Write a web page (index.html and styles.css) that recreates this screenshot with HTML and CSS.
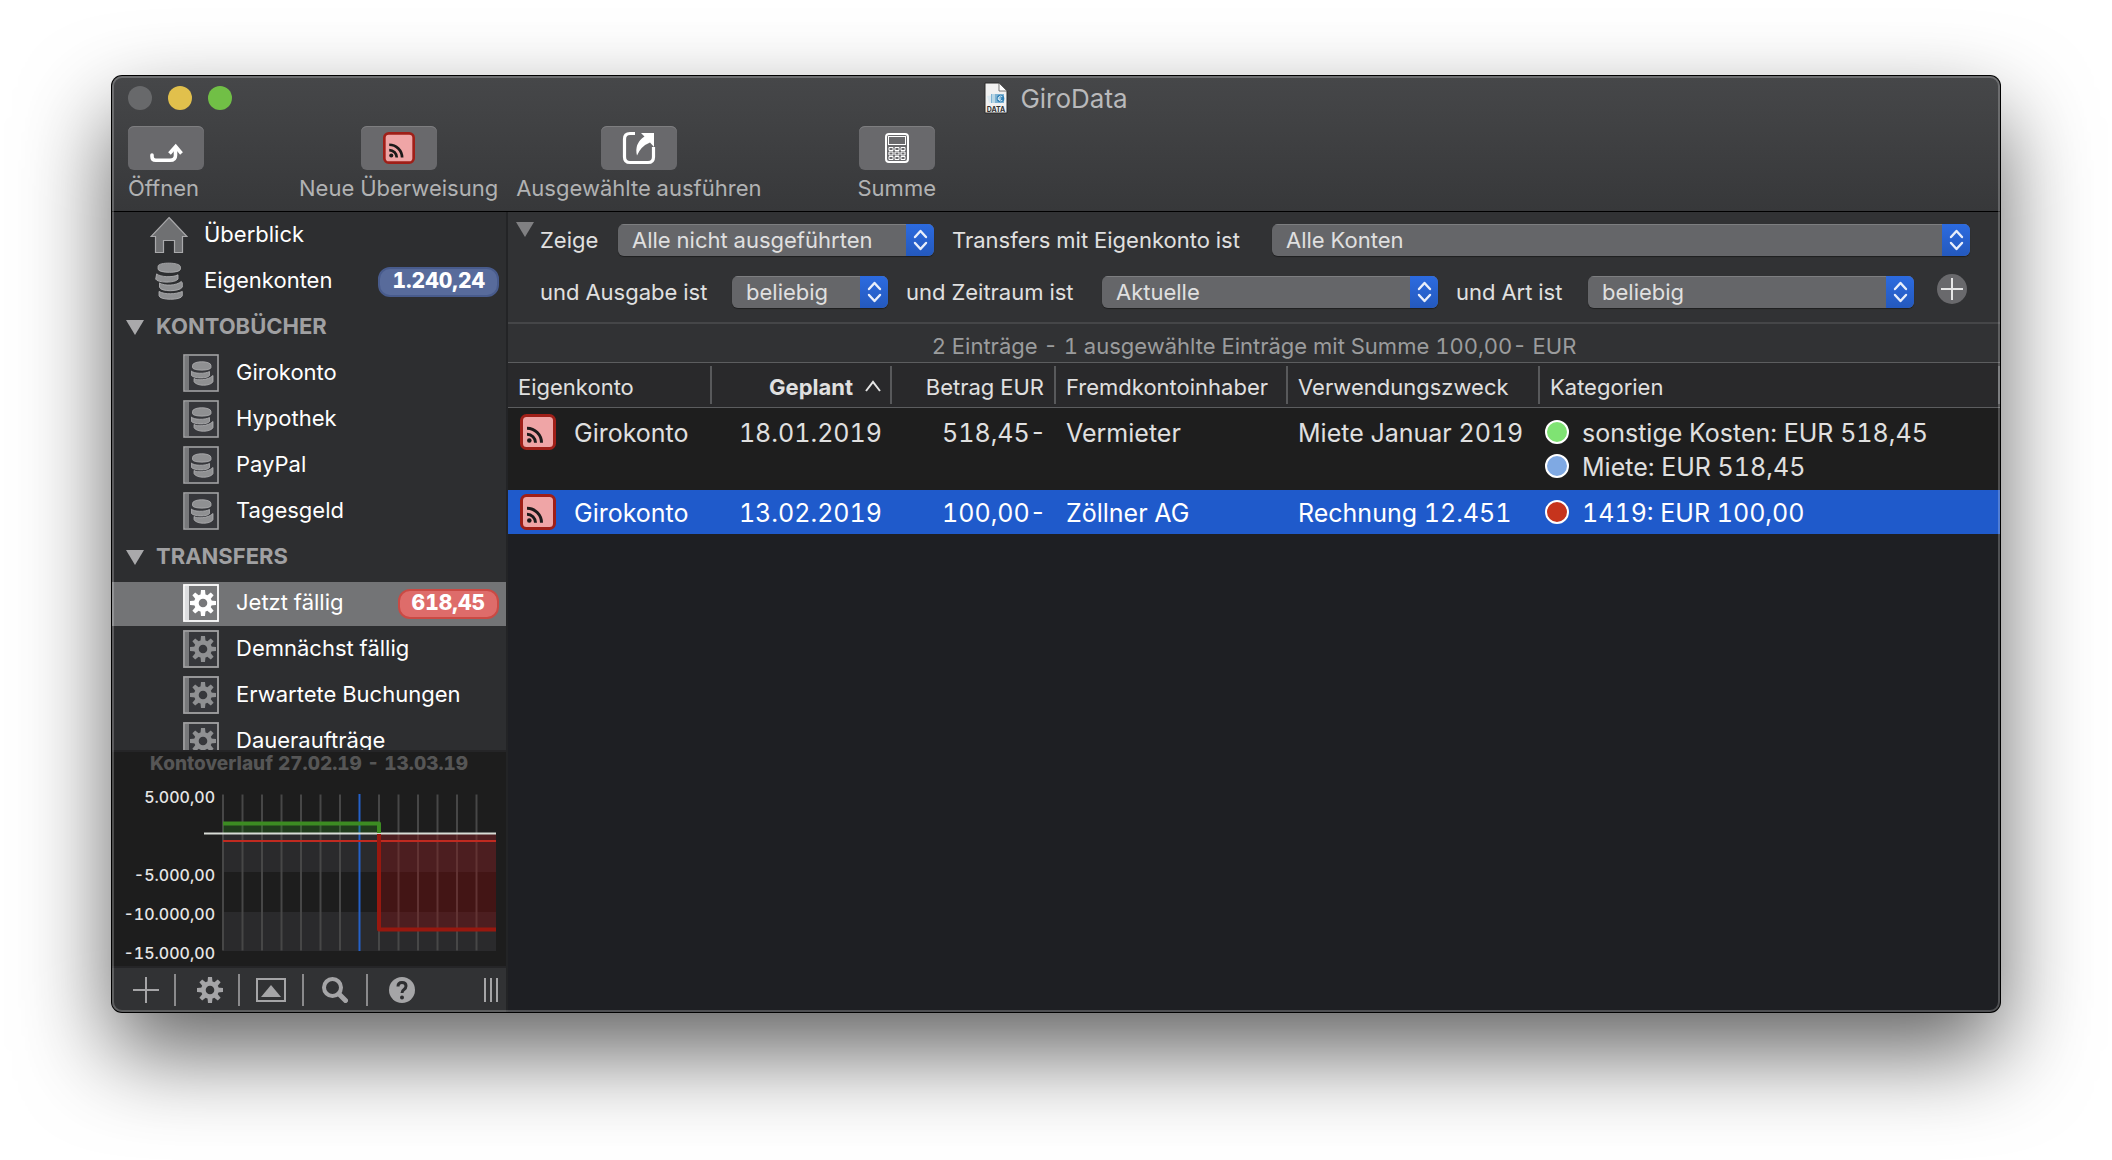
FILE: index.html
```html
<!DOCTYPE html>
<html lang="de">
<head>
<meta charset="utf-8">
<title>GiroData</title>
<link rel="stylesheet" href="styles.css">
</head>
<body>
<svg class="defs" aria-hidden="true">
  <symbol id="gear" viewBox="0 0 26 26">
    <circle cx="13" cy="13" r="6.6" fill="none" stroke="currentColor" stroke-width="4.6"/>
    <g fill="currentColor">
      <path d="M11 0h4l.6 6h-5.2z"/>
      <path d="M11 0h4l.6 6h-5.2z" transform="rotate(45 13 13)"/>
      <path d="M11 0h4l.6 6h-5.2z" transform="rotate(90 13 13)"/>
      <path d="M11 0h4l.6 6h-5.2z" transform="rotate(135 13 13)"/>
      <path d="M11 0h4l.6 6h-5.2z" transform="rotate(180 13 13)"/>
      <path d="M11 0h4l.6 6h-5.2z" transform="rotate(225 13 13)"/>
      <path d="M11 0h4l.6 6h-5.2z" transform="rotate(270 13 13)"/>
      <path d="M11 0h4l.6 6h-5.2z" transform="rotate(315 13 13)"/>
    </g>
  </symbol>
  <symbol id="book-coins" viewBox="0 0 36 38">
    <rect x="1" y="1" width="34" height="36" fill="#36373b" stroke="#a2a2a4" stroke-width="1.6"/>
    <path d="M2 2h4v34H2z" fill="#77787a"/>
    <g fill="#8f9092" stroke="#b0b0b2" stroke-width=".8">
      <path d="M11 24.500c3 2 14 2 19-3v6c-2 5-17 5-19 0z"/>
      <path d="M8.500 17c2 2.800 14 3 18 .500v4c-2 3.500-16 3-18 0z"/>
      <path d="M9.500 11.500c0-5 18.500-5 18.500 0v2c0 3.500-18.500 3.500-18.500 0z"/>
    </g>
  </symbol>
  <symbol id="transfer" viewBox="0 0 36 36">
    <rect x="1.500" y="1.500" width="33" height="33" rx="5" fill="#efa5a6" stroke="#9f1f18" stroke-width="3"/>
    <circle cx="9.300" cy="26.500" r="2.300" fill="#1c1a1a"/>
    <path d="M7 20.300a8.500 8.500 0 0 1 8.500 8.500M7 14.300a14.500 14.500 0 0 1 14.500 14.500" fill="none" stroke="#1c1a1a" stroke-width="3"/>
  </symbol>
  <symbol id="updown" viewBox="0 0 28 32">
    <rect width="28" height="32" fill="url(#blue)"/>
    <path d="M9 13l5.500-6 5.500 6M9 19l5.500 6 5.500-6" fill="none" stroke="#e8eefb" stroke-width="2.400" stroke-linecap="round" stroke-linejoin="round"/>
  </symbol>
  <symbol id="book-gear" viewBox="0 0 36 38">
    <rect x="1" y="1" width="34" height="36" fill="var(--page)" stroke="var(--edge)" stroke-width="1.800"/>
    <path d="M2 2h4v34H2z" fill="var(--spine)"/>
    <use href="#gear" x="7" y="6" width="26" height="26"/>
  </symbol>
  <linearGradient id="blue" x1="0" y1="0" x2="0" y2="1">
    <stop offset="0" stop-color="#2c6be0"/><stop offset="1" stop-color="#2459bd"/>
  </linearGradient>
</svg>

<main class="window">
  <header class="header">
    <div class="titlebar">
      <div class="lights">
        <button class="light light-close" type="button" aria-label="Schließen"></button>
        <button class="light light-min" type="button" aria-label="Minimieren"></button>
        <button class="light light-zoom" type="button" aria-label="Zoomen"></button>
      </div>
      <h1 class="title">
        <svg class="doc" viewBox="0 0 24 32" aria-hidden="true">
          <path d="M1 1h14l8 8v22H1z" fill="#f1f1f1" stroke="#2b2b2b" stroke-width="1"/>
          <path d="M15 1l8 8h-8z" fill="#fff" stroke="#555" stroke-width=".8"/>
          <path d="M3 14l16-2 2 7-16 2z" fill="#dbe9f0"/>
          <rect x="7" y="12" width="13" height="9" fill="#7fb2d2"/>
          <rect x="8" y="12" width="3" height="9" fill="#b8d6e5"/>
          <circle cx="16.500" cy="16.500" r="3.800" fill="#2f7fb5"/>
          <path d="M18.300 14.600a2.400 2.400 0 1 0 0 3.800M13.800 16h3.500M13.800 17.300h3" fill="none" stroke="#d9edf7" stroke-width="1"/>
          <text x="12" y="29.500" text-anchor="middle" class="doc-label">DATA</text>
        </svg>
        GiroData
      </h1>
    </div>
    <div class="toolbar">
      <button class="tool tool-open" type="button">
        <span class="tool-face"><svg width="36" height="36" viewBox="0 0 36 36"><path d="M4 25v1.500q0 3.700 3.700 3.700H22q5.500 0 5.500-5V19" fill="none" stroke="#fff" stroke-width="3.600" stroke-linecap="round"/><path d="M21.500 23.500l6.200-7 5.800 7" fill="none" stroke="#fff" stroke-width="3.600"/></svg></span>
        <span>Öffnen</span>
      </button>
      <button class="tool tool-new" type="button">
        <span class="tool-face"><svg width="32" height="32"><use href="#transfer"/></svg></span>
        <span>Neue Überweisung</span>
      </button>
      <button class="tool tool-run" type="button">
        <span class="tool-face"><svg width="34" height="34" viewBox="0 0 34 34"><path d="M13 2.500H8Q2.500 2.500 2.500 8v18q0 5.500 5.500 5.500h18q5.500 0 5.500-5.500V16" fill="none" stroke="#fff" stroke-width="3.200"/><path d="M19 2h13v14l-4-4.500q-9 3.500-13 13-3-12 7.500-19z" fill="#fff"/></svg></span>
        <span>Ausgewählte ausführen</span>
      </button>
      <button class="tool tool-sum" type="button">
        <span class="tool-face"><svg width="24" height="30" viewBox="0 0 24 30" fill="none" stroke="#fff"><rect x="1" y="1" width="22" height="28" rx="3" stroke-width="2"/><rect x="3.500" y="3.500" width="17" height="8"/><path d="M4 14.500h4v3H4zM10 14.500h4v3h-4zM16 14.500h4v3h-4zM4 19h4v3H4zM10 19h4v3h-4zM16 19h4v3h-4zM4 23.500h4v3H4zM10 23.500h4v3h-4zM16 23.500h4v3h-4z"/></svg></span>
        <span>Summe</span>
      </button>
    </div>
  </header>

  <div class="body">
    <aside class="sidebar">
      <nav class="nav">
        <a class="item" href="#"><svg class="top-icon" viewBox="0 0 38 38"><path d="M19 1.500L37 20.500h-4.500V36.500h-8V24.500h-11v12h-8v-16H1z" fill="#6f7072" stroke="#a9a9ab" stroke-width="1.200"/></svg><span>Überblick</span></a>
        <a class="item" href="#"><svg class="top-icon" viewBox="0 0 38 40"><g fill="#8f9092" stroke="#b2b2b4" stroke-width=".9"><path d="M8.500 31c6 3.500 18 3 24.500 0v4.500c-1 5-24 5-24.500 0z"/><path d="M9 22c5 3.500 18 3 23-1.500l1 1.500v4.500c-3 5-23 5-24 0z"/><path d="M6 12.500c4 3.500 17 4 22.500 1v4.500c-3 4.500-22 4-23.500 0z"/><path d="M7.500 4.500c0-4.500 23-4.500 23.500.500v2.500c0 4.500-23 4.500-23.500 0z"/></g></svg><span>Eigenkonten</span><span class="badge badge-blue">1.240,24</span></a>
        <h2 class="section"><svg width="18" height="15"><path d="M0 0h18L9 15z" fill="#a9a9ab"/></svg><span>KONTOBÜCHER</span></h2>
        <a class="item sub" href="#"><svg class="book"><use href="#book-coins"/></svg><span>Girokonto</span></a>
        <a class="item sub" href="#"><svg class="book"><use href="#book-coins"/></svg><span>Hypothek</span></a>
        <a class="item sub" href="#"><svg class="book"><use href="#book-coins"/></svg><span>PayPal</span></a>
        <a class="item sub" href="#"><svg class="book"><use href="#book-coins"/></svg><span>Tagesgeld</span></a>
        <h2 class="section"><svg width="18" height="15"><path d="M0 0h18L9 15z" fill="#a9a9ab"/></svg><span>TRANSFERS</span></h2>
        <a class="item sub selected" href="#" aria-current="page"><svg class="book"><use href="#book-gear"/></svg><span>Jetzt fällig</span><span class="badge badge-red">618,45</span></a>
        <a class="item sub" href="#"><svg class="book"><use href="#book-gear"/></svg><span>Demnächst fällig</span></a>
        <a class="item sub" href="#"><svg class="book"><use href="#book-gear"/></svg><span>Erwartete Buchungen</span></a>
        <a class="item sub" href="#"><svg class="book"><use href="#book-gear"/></svg><span>Daueraufträge</span></a>
      </nav>
      <svg class="chart" viewBox="0 0 394 214" role="img" aria-label="Kontoverlauf">
        <text class="chart-title" x="197" y="18" text-anchor="middle">Kontoverlauf 27.02.19 - 13.03.19</text>
        <g class="chart-label" text-anchor="end">
          <text x="103" y="51">5.000,00</text>
          <text x="103" y="129">-5.000,00</text>
          <text x="103" y="168">-10.000,00</text>
          <text x="103" y="207">-15.000,00</text>
        </g>
        <path d="M111 82h273v38H111zM111 160h273v39H111z" fill="#2a2a2c"/>
        <path d="M111 42.500v156M130.500 42.500v156M150 42.500v156M169.500 42.500v156M189 42.500v156M208.500 42.500v156M228 42.500v156M267 42.500v156M286.500 42.500v156M306 42.500v156M325.500 42.500v156M345 42.500v156M364.500 42.500v156" stroke="#474747" stroke-width="2"/>
        <path d="M247.500 42v157" stroke="#2461c8" stroke-width="2"/>
        <path d="M111 72h156v9H111z" fill="#2b9a1c" fill-opacity=".25"/>
        <path d="M267 82h117v95H267z" fill="#a00" fill-opacity=".27"/>
        <path d="M92 81.500h292" stroke="#d8dcd6" stroke-width="2"/>
        <path d="M111 89h273" stroke="#c02a20" stroke-width="2"/>
        <path d="M111 71.500h156V81" fill="none" stroke="#3c8c22" stroke-width="4" stroke-linejoin="round"/>
        <path d="M267 82v95.500h117" fill="none" stroke="#98180f" stroke-width="4" stroke-linejoin="round"/>
      </svg>
      <div class="bottombar">
        <button type="button" aria-label="Hinzufügen"><svg width="26" height="26"><path d="M13 0v26M0 13h26" stroke="#a5a5a7" stroke-width="2"/></svg></button>
        <button type="button" aria-label="Aktionen"><svg width="26" height="26"><use href="#gear"/></svg></button>
        <button type="button" aria-label="Diagramm"><svg width="30" height="24"><rect x="1" y="1" width="28" height="22" fill="none" stroke="#a5a5a7" stroke-width="2"/><path d="M5 19l10-12 10 12z" fill="#a5a5a7"/></svg></button>
        <button type="button" aria-label="Suchen"><svg width="26" height="26"><circle cx="10.500" cy="10.500" r="8.500" fill="none" stroke="#a5a5a7" stroke-width="4"/><path d="M17 17l6.500 6.500" stroke="#a5a5a7" stroke-width="5" stroke-linecap="round"/></svg></button>
        <button type="button" aria-label="Hilfe"><svg width="26" height="26"><circle cx="13" cy="13" r="13" fill="#a5a5a7"/><path d="M9 9.500q0-4 4-4t4 3.500q0 2-2 3.500-2 1.200-2 3.500" fill="none" stroke="#2d2e30" stroke-width="3"/><circle cx="13" cy="20.500" r="2" fill="#2d2e30"/></svg></button>
        <svg class="grip" width="14" height="24"><path d="M1 0v24M7 0v24M13 0v24" stroke="#a5a5a7" stroke-width="2"/></svg>
      </div>
    </aside>

    <section class="content">
      <form class="filters">
        <svg class="disclosure" width="18" height="15"><path d="M0 0h18L9 15z" fill="#808082"/></svg>
        <div class="filter-row row-one">
          <label for="f-show">Zeige</label>
          <span class="select"><select id="f-show"><option>Alle nicht ausgeführten</option></select><svg width="28" height="32"><use href="#updown"/></svg></span>
          <label for="f-account" class="next">Transfers mit Eigenkonto ist</label>
          <span class="select"><select id="f-account"><option>Alle Konten</option></select><svg width="28" height="32"><use href="#updown"/></svg></span>
        </div>
        <div class="filter-row row-two">
          <label for="f-out">und Ausgabe ist</label>
          <span class="select"><select id="f-out"><option>beliebig</option></select><svg width="28" height="32"><use href="#updown"/></svg></span>
          <label for="f-time" class="next">und Zeitraum ist</label>
          <span class="select"><select id="f-time"><option>Aktuelle</option></select><svg width="28" height="32"><use href="#updown"/></svg></span>
          <label for="f-kind" class="next">und Art ist</label>
          <span class="select"><select id="f-kind"><option>beliebig</option></select><svg width="28" height="32"><use href="#updown"/></svg></span>
          <button class="add" type="button" aria-label="Filter hinzufügen"><svg width="30" height="30"><circle cx="15" cy="15" r="15" fill="#69696c"/><path d="M15 4v22M4 15h22" stroke="#e6e6e6" stroke-width="2"/></svg></button>
        </div>
      </form>
      <p class="status">2 Einträge - 1 ausgewählte Einträge mit Summe 100,00- EUR</p>
      <table class="grid">
        <colgroup><col class="c-account"><col class="c-date"><col class="c-amount"><col class="c-owner"><col class="c-purpose"><col></colgroup>
        <thead>
          <tr>
            <th>Eigenkonto</th>
            <th class="num sorted">Geplant<svg width="16" height="12"><path d="M1 11l7-9 7 9" fill="none" stroke="#e4e4e4" stroke-width="2"/></svg></th>
            <th class="num">Betrag EUR</th>
            <th>Fremdkontoinhaber</th>
            <th>Verwendungszweck</th>
            <th>Kategorien</th>
          </tr>
        </thead>
        <tbody>
          <tr class="tall">
            <td class="account"><div class="line"><svg width="36" height="36"><use href="#transfer"/></svg><span>Girokonto</span></div></td>
            <td class="num">18.01.2019</td>
            <td class="num">518,45-</td>
            <td>Vermieter</td>
            <td>Miete Januar 2019</td>
            <td class="cats"><div class="line"><i class="dot dot-green"></i><span>sonstige Kosten: EUR 518,45</span></div><div class="line extra"><i class="dot dot-blue"></i><span>Miete: EUR 518,45</span></div></td>
          </tr>
          <tr class="picked">
            <td class="account"><div class="line"><svg width="36" height="36"><use href="#transfer"/></svg><span>Girokonto</span></div></td>
            <td class="num">13.02.2019</td>
            <td class="num">100,00-</td>
            <td>Zöllner AG</td>
            <td>Rechnung 12.451</td>
            <td class="cats"><div class="line"><i class="dot dot-red"></i><span>1419: EUR 100,00</span></div></td>
          </tr>
        </tbody>
      </table>
    </section>
  </div>
</main>
</body>
</html>
```
FILE: styles.css
```css
* { box-sizing: border-box; }

body {
  margin: 0;
  height: 100vh;
  padding: 76px 112px 148px;
  display: flex;
  background: #fff;
  font-family: Inter, "Liberation Sans", sans-serif;
  font-size: 22px;
  font-variant-numeric: tabular-nums;
  color: #e0e0e0;
}

button, select {
  font: inherit;
  color: inherit;
  border: 0;
  padding: 0;
  background: none;
}

svg { display: block; flex: none; }
.defs { position: absolute; width: 0; height: 0; }

.window {
  position: relative;
  flex: 1;
  min-width: 0;
  display: flex;
  flex-direction: column;
  border-radius: 10px;
  background: #1e1f23;
  box-shadow: 0 0 0 1px #000, 0 40px 90px rgba(0, 0, 0, .62);
}

/* light rim drawn over all panes */
.window::after {
  content: "";
  position: absolute;
  inset: 0;
  border: 2px solid rgba(255, 255, 255, .22);
  border-radius: 10px;
  pointer-events: none;
}

/* title bar and toolbar */
.header {
  height: 136px;
  flex: none;
  border-bottom: 1px solid #000;
  border-radius: 10px 10px 0 0;
  background: linear-gradient(#464749, #37383a);
}

.titlebar {
  height: 44px;
  padding: 0 16px;
  display: grid;
  grid-template-columns: 1fr auto 1fr;
  align-items: center;
}

.lights { display: flex; gap: 16px; }
.light { width: 24px; height: 24px; border-radius: 50%; }
.light-close { background: #68696b; }
.light-min { background: #e1c04c; }
.light-zoom { background: #71bf46; }

.title {
  margin: 0;
  display: flex;
  align-items: center;
  gap: 12px;
  font-size: 26px;
  font-weight: 400;
  color: #b9b9bb;
}
.doc { width: 24px; height: 32px; }
.doc-label { font-size: 7px; font-weight: 700; fill: #333; }

.toolbar {
  display: flex;
  padding: 6px 16px 0;
}
.tool {
  display: flex;
  flex-direction: column;
  align-items: center;
  gap: 4px;
  line-height: 28px;
  color: #b1b2b3;
}
.tool-open { align-items: flex-start; }
.tool-new { margin-left: 95px; }
.tool-run { margin-left: 18px; }
.tool-sum { margin-left: 96px; }
.tool-face {
  width: 76px;
  height: 44px;
  display: grid;
  place-items: center;
  border-radius: 6px;
  background: #69696c;
  box-shadow: inset 0 1px #7e7e80;
}

.body { flex: 1; min-height: 0; display: flex; }

/* sidebar */
.sidebar {
  width: 396px;
  flex: none;
  display: flex;
  flex-direction: column;
  border-right: 2px solid #232426;
  border-radius: 0 0 0 10px;
  background: #2d2e30;
}
.nav {
  flex: 1;
  min-height: 0;
  overflow: hidden;
  padding-top: 2px;
  display: flex;
  flex-direction: column;
  gap: 2px;
}
.item, .section {
  flex: none;
  height: 44px;
  margin: 0;
  display: flex;
  align-items: center;
  line-height: 28px;
}
.item > span, .section > span { padding-bottom: 4px; }
.item > svg, .section > svg { margin-bottom: 2px; }
.item {
  --page: #36373b;
  --edge: #a2a2a4;
  --spine: #77787a;
  gap: 16px;
  padding: 0 7px 0 38px;
  color: #fff;
  text-decoration: none;
}
.item.sub { gap: 17px; padding-left: 71px; }
.item.selected {
  --page: #77787a;
  --edge: #fff;
  --spine: #dcdddf;
  background: #737476;
}
.top-icon { width: 38px; height: 38px; }
.book { width: 36px; height: 38px; color: #8f9092; }
.selected .book { color: #fff; }
.section { gap: 12px; padding-left: 14px; font-size: 22px; font-weight: 700; color: #a0a0a2; }
.item > .badge {
  margin-left: auto;
  height: 30px;
  padding: 0 12px;
  border: 2px solid;
  border-radius: 12px;
  font-size: 21px;
  line-height: 24px;
  font-weight: 800;
}
.item > .badge-blue { background: #586b9b; border-color: #485b8c; }
.item > .badge-red { background: #de6c6a; border-color: #ca4a44; }

.chart {
  width: 394px;
  height: 218px;
  border: solid #252527;
  border-width: 2px 0;
  background: #1d1d1d;
}
.chart-title { font-size: 19px; font-weight: 800; fill: #565656; }
.chart-label { font-size: 16px; font-weight: 500; fill: #e6e6e6; }

.bottombar {
  height: 44px;
  display: flex;
  align-items: center;
  padding-right: 8px;
  border-radius: 0 0 0 10px;
  background: #313234;
  color: #a5a5a7;
}
.bottombar button {
  width: 64px;
  height: 32px;
  display: grid;
  place-items: center;
  border-right: 2px solid #8a8a8c;
}
.bottombar button:nth-of-type(-n+2) { padding-left: 6px; }
.bottombar button:last-of-type { border: 0; width: 68px; }
.grip { margin-left: auto; }

/* filters */
.content { flex: 1; min-width: 0; }
.filters {
  height: 112px;
  display: grid;
  grid-template-columns: 32px 1fr;
  grid-template-rows: 32px 32px;
  row-gap: 20px;
  padding: 12px 30px 0 0;
  border-bottom: 2px solid #454648;
  background: #313234;
}
.disclosure { margin-left: 8px; margin-top: -2px; }
.filter-row { grid-column: 2; display: grid; align-items: center; }
.row-one { grid-template-columns: 78px 316px 338px 1fr; }
.row-two { grid-template-columns: 192px 156px 214px 336fr 150px 326fr 56px; }
.next { padding-left: 18px; }
.select {
  display: grid;
  height: 32px;
  border-radius: 6px;
  overflow: hidden;
  box-shadow: 0 1px 1px rgba(0, 0, 0, .4);
}
.select select, .select svg { grid-area: 1 / 1; }
.select svg { justify-self: end; pointer-events: none; }
.select select {
  appearance: none;
  width: 100%;
  height: 32px;
  padding: 0 40px 0 14px;
  background: #656669;
  box-shadow: inset 0 1px #7d7e80;
}
.add { justify-self: end; height: 30px; margin-right: 3px; margin-top: -6px; }

.status {
  height: 39px;
  margin: 0;
  border-bottom: 1px solid #5c5d5f;
  background: #313234;
  text-align: center;
  line-height: 44px;
  color: #9b9c9d;
}

/* transfers */
.grid {
  width: 100%;
  table-layout: fixed;
  border-collapse: separate;
  border-spacing: 0;
  font-size: 25px;
}
.c-account { width: 204px; }
.c-date { width: 180px; }
.c-amount { width: 164px; }
.c-owner { width: 232px; }
.c-purpose { width: 252px; }
th {
  height: 45px;
  padding: 4px 10px 0;
  border-bottom: 1px solid #5c5d5f;
  text-align: left;
  font-size: 22px;
  font-weight: 400;
  white-space: nowrap;
  background: linear-gradient(#58595b, #58595b) right center / 2px 38px no-repeat #29292b;
}
th.num { padding-right: 12px; }
th.sorted { padding-right: 11px; font-weight: 700; }
.sorted svg { display: inline-block; margin-left: 12px; vertical-align: 3px; }
td {
  height: 44px;
  padding: 2px 10px 0;
  vertical-align: top;
  line-height: 42px;
  white-space: nowrap;
}
.num { text-align: right; }
td.account { padding: 0 0 0 12px; }
td.cats { padding: 0 0 0 5px; }
.line { display: flex; align-items: center; height: 44px; }
.line > span { padding-top: 2px; }
.account .line { gap: 18px; }
.cats .line { gap: 13px; }
.cats .extra { height: 34px; margin-top: -5px; }
.tall td { height: 82px; border-top: 2px solid #1e1e1e; background: #1e1e1e; }
.picked td { background: #1f5acb; color: #fff; }
.dot { width: 24px; height: 24px; border: 2px solid #fff; border-radius: 50%; }
.dot-green { background: #7fe373; }
.dot-blue { background: #7fa9e3; }
.dot-red { background: #c6341d; }
```
